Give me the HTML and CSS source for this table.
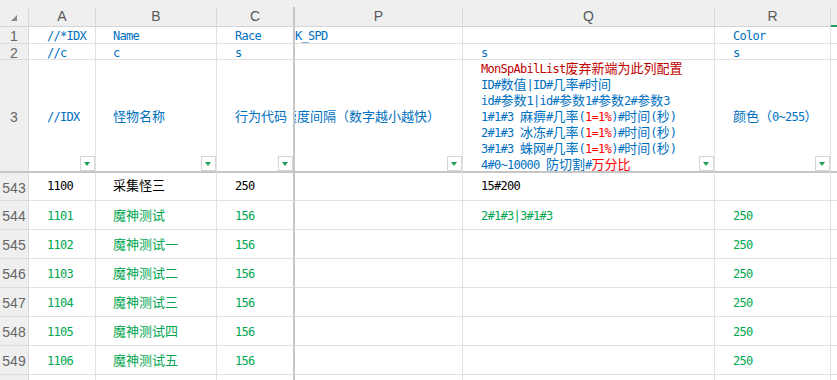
FILE: index.html
```html
<!DOCTYPE html>
<html lang="zh-CN">
<head>
<meta charset="utf-8">
<title>Sheet</title>
<link rel="stylesheet" href="styles.css">
</head>
<body>
<div class="sheet">
  <div class="row hdr">
    <div class="corner"><svg width="6" height="6" viewBox="0 0 6 6"><polygon points="6,0 6,6 0,6" fill="#8a8a8a"/></svg></div>
    <div class="ch">A</div>
    <div class="ch">B</div>
    <div class="ch fz">C</div>
    <div class="ch">P</div>
    <div class="ch">Q</div>
    <div class="ch">R</div>
    <div class="ch sel"></div>
  </div>

  <div class="row r1 blue">
    <div class="rh">1</div>
    <div class="c">//*IDX</div>
    <div class="c cb">Name</div>
    <div class="c fz">Race</div>
    <div class="c cp">K_SPD</div>
    <div class="c"></div>
    <div class="c">Color</div>
    <div class="c"></div>
  </div>

  <div class="row r2 blue">
    <div class="rh">2</div>
    <div class="c">//c</div>
    <div class="c cb">c</div>
    <div class="c fz">s</div>
    <div class="c cp"></div>
    <div class="c">s</div>
    <div class="c">s</div>
    <div class="c"></div>
  </div>

  <div class="row r3 blue">
    <div class="rh">3</div>
    <div class="c mid">//IDX<i class="flt"></i></div>
    <div class="c cb mid"><span class="k">怪物名称</span><i class="flt"></i></div>
    <div class="c fz mid"><span class="k">行为代码</span><i class="flt"></i></div>
    <div class="c cp mid"><span class="k cutc">速度间隔（数字越小越快）</span><i class="flt"></i></div>
    <div class="c q">
      <div class="dred">MonSpAbilList<span class="k">废弃新端为此列配置</span></div>
      <div>ID#<span class="k">数值</span>|ID#<span class="k">几率</span>#<span class="k">时间</span></div>
      <div>id#<span class="k">参数</span>1|id#<span class="k">参数</span>1#<span class="k">参数</span>2#<span class="k">参数</span>3</div>
      <div>1#1#3 <span class="k">麻痹</span>#<span class="k">几率</span>(<span class="red">1=1%</span>)#<span class="k">时间</span>(<span class="k">秒</span>)</div>
      <div>2#1#3 <span class="k">冰冻</span>#<span class="k">几率</span>(<span class="red">1=1%</span>)#<span class="k">时间</span>(<span class="k">秒</span>)</div>
      <div>3#1#3 <span class="k">蛛网</span>#<span class="k">几率</span>(<span class="red">1=1%</span>)#<span class="k">时间</span>(<span class="k">秒</span>)</div>
      <div>4#0~10000 <span class="k">防切割</span>#<span class="k red">万分比</span></div>
      <i class="flt"></i>
    </div>
    <div class="c mid"><span class="k">颜色（</span>0~255<span class="k">）</span><i class="flt"></i></div>
    <div class="c"></div>
  </div>

  <div class="row r543 black">
    <div class="rh">543</div>
    <div class="c">1100</div>
    <div class="c cb"><span class="k">采集怪三</span></div>
    <div class="c fz">250</div>
    <div class="c cp"></div>
    <div class="c">15#200</div>
    <div class="c"></div>
    <div class="c"></div>
  </div>

  <div class="row rd green">
    <div class="rh">544</div>
    <div class="c">1101</div>
    <div class="c cb"><span class="k">魔神测试</span></div>
    <div class="c fz">156</div>
    <div class="c cp"></div>
    <div class="c">2#1#3|3#1#3</div>
    <div class="c">250</div>
    <div class="c"></div>
  </div>

  <div class="row rd green">
    <div class="rh">545</div>
    <div class="c">1102</div>
    <div class="c cb"><span class="k">魔神测试一</span></div>
    <div class="c fz">156</div>
    <div class="c cp"></div>
    <div class="c"></div>
    <div class="c">250</div>
    <div class="c"></div>
  </div>

  <div class="row rd green">
    <div class="rh">546</div>
    <div class="c">1103</div>
    <div class="c cb"><span class="k">魔神测试二</span></div>
    <div class="c fz">156</div>
    <div class="c cp"></div>
    <div class="c"></div>
    <div class="c">250</div>
    <div class="c"></div>
  </div>

  <div class="row rd green">
    <div class="rh">547</div>
    <div class="c">1104</div>
    <div class="c cb"><span class="k">魔神测试三</span></div>
    <div class="c fz">156</div>
    <div class="c cp"></div>
    <div class="c"></div>
    <div class="c">250</div>
    <div class="c"></div>
  </div>

  <div class="row rd green">
    <div class="rh">548</div>
    <div class="c">1105</div>
    <div class="c cb"><span class="k">魔神测试四</span></div>
    <div class="c fz">156</div>
    <div class="c cp"></div>
    <div class="c"></div>
    <div class="c">250</div>
    <div class="c"></div>
  </div>

  <div class="row rd green">
    <div class="rh">549</div>
    <div class="c">1106</div>
    <div class="c cb"><span class="k">魔神测试五</span></div>
    <div class="c fz">156</div>
    <div class="c cp"></div>
    <div class="c"></div>
    <div class="c">250</div>
    <div class="c"></div>
  </div>

  <div class="row rl">
    <div class="rh"></div>
    <div class="c"></div>
    <div class="c cb"></div>
    <div class="c fz"></div>
    <div class="c cp"></div>
    <div class="c"></div>
    <div class="c"></div>
    <div class="c"></div>
  </div>
</div>
</body>
</html>
```

FILE: styles.css
```css
* {
  box-sizing: border-box;
  margin: 0;
  padding: 0;
}

body {
  margin: 0;
  background: #ffffff;
  overflow: hidden;
}

.sheet {
  width: 837px;
  height: 380px;
  overflow: hidden;
  font-family: "DejaVu Sans Mono", "Liberation Mono", "Noto Sans CJK SC", monospace;
  font-size: 12px;
  letter-spacing: -0.72px;
  background: #ffffff;
}

.row {
  display: grid;
  grid-template-columns: 29px 67px 121px 78px 168px 252px 116px 1fr;
}

/* column header */
.hdr {
  height: 27px;
  padding-top: 7px;
  grid-template-rows: 20px;
  background: #efefef;
}

.corner {
  border-right: 1px solid #d9d9d9;
  border-bottom: 1px solid #d4d4d4;
  padding: 8px 0 0 11px;
  line-height: 0;
}

.ch {
  border-right: 1px solid #d9d9d9;
  border-bottom: 1px solid #d4d4d4;
  text-align: center;
  font-family: "Liberation Sans", "Noto Sans", sans-serif;
  font-size: 14px;
  letter-spacing: 0;
  line-height: 19px;
  color: #595959;
}

.ch.fz {
  border-right: 2px solid #c6c6c6;
}

.ch.sel {
  border-right: none;
  border-bottom: 2px solid #1f9d5b;
}

/* row heights */
.r1 { grid-template-rows: 17px; }
.r2 { grid-template-rows: 16px; }
.r3 { grid-template-rows: 113px; }
.r543 { grid-template-rows: 28px; }
.rd { grid-template-rows: 29px; }
.rl { grid-template-rows: 10px; }

/* row header */
.rh {
  display: flex;
  align-items: center;
  justify-content: center;
  padding-top: 2px;
  background: #efefef;
  border-right: 1px solid #d9d9d9;
  border-bottom: 1px solid #dcdcdc;
  font-family: "Liberation Sans Narrow", "Liberation Sans", sans-serif;
  font-size: 14px;
  letter-spacing: 0;
  color: #666666;
}

/* cells */
.c {
  position: relative;
  padding-left: 18px;
  border-right: 1px solid #e1e1e1;
  border-bottom: 1px solid #e1e1e1;
  white-space: nowrap;
  overflow: hidden;
  line-height: 16px;
}

.c.cb {
  padding-left: 17px;
}

.c.fz {
  border-right: 2px solid #c6c6c6;
}

.c.cp {
  padding-left: 0;
}

.r3 > .c,
.r3 > .rh {
  border-bottom: 2px solid #c6c6c6;
}

.r1 > .c {
  overflow: visible;
  padding-top: 1px;
  line-height: 16px;
}

.r2 > .c {
  padding-top: 2px;
  line-height: 15px;
}

.r543 > .c {
  padding-top: 0;
  line-height: 27px;
}

.rd > .c {
  padding-top: 1px;
  line-height: 28px;
}

.r3 > .mid {
  padding-top: 49px;
}

.cutc {
  margin-left: -11px;
}

.c.q {
  padding-top: 1px;
  line-height: 16px;
}

.k {
  font-family: "Noto Sans CJK SC", sans-serif;
  font-size: 13px;
  letter-spacing: 0;
  line-height: 0;
}

/* colours */
.blue { color: #0070c0; }
.black { color: #000000; }
.green { color: #00a650; }
.dred { color: #c00000; }
.red { color: #ff0000; }

/* filter buttons */
.flt {
  position: absolute;
  right: 0;
  bottom: 0;
  width: 15px;
  height: 15px;
  border: 1px solid #d6d6d6;
  background: #ffffff;
}

.flt::after {
  content: "";
  position: absolute;
  left: 3px;
  top: 5px;
  border-left: 3.5px solid transparent;
  border-right: 3.5px solid transparent;
  border-top: 4px solid #1e9e5a;
}
```
